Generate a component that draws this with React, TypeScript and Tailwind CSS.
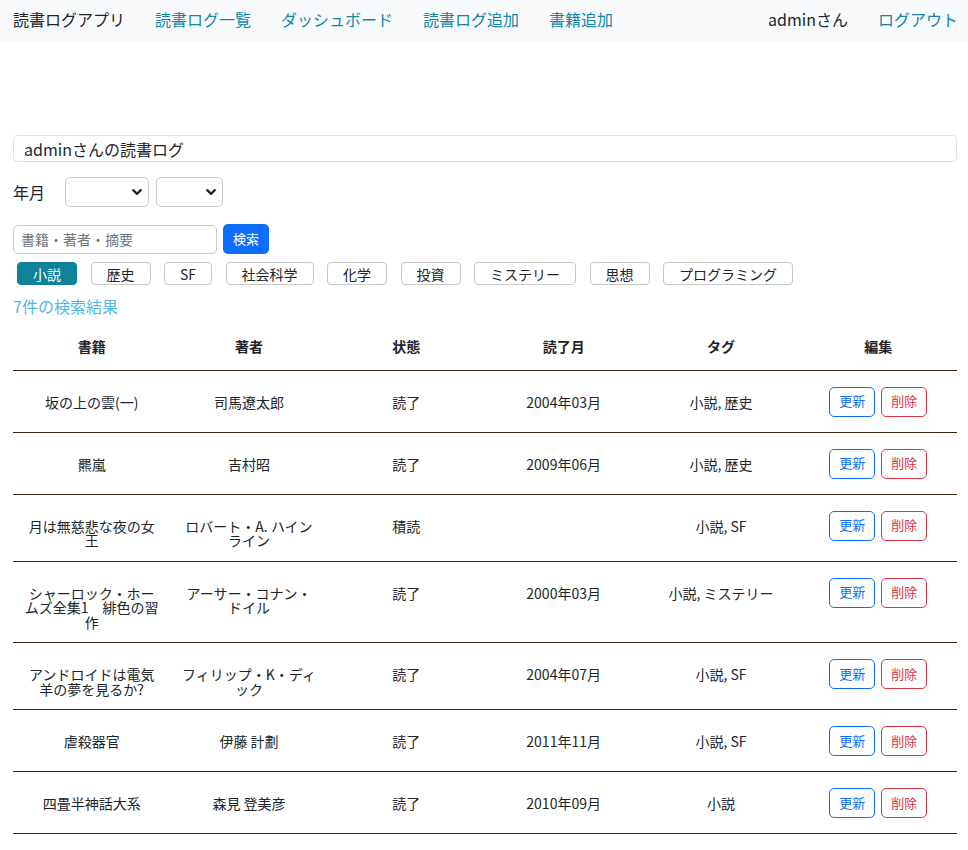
import React from 'react'

type Log = {
  title: string
  author: string
  status: string
  month: string
  tags: string
}

const logs: Log[] = [
  { title: '坂の上の雲(一)', author: '司馬遼太郎', status: '読了', month: '2004年03月', tags: '小説, 歴史' },
  { title: '羆嵐', author: '吉村昭', status: '読了', month: '2009年06月', tags: '小説, 歴史' },
  { title: '月は無慈悲な夜の女王', author: 'ロバート・A. ハインライン', status: '積読', month: '', tags: '小説, SF' },
  {
    title: 'シャーロック・ホームズ全集1　緋色の習作',
    author: 'アーサー・コナン・ドイル',
    status: '読了',
    month: '2000年03月',
    tags: '小説, ミステリー',
  },
  {
    title: 'アンドロイドは電気羊の夢を見るか?',
    author: 'フィリップ・K・ディック',
    status: '読了',
    month: '2004年07月',
    tags: '小説, SF',
  },
  { title: '虐殺器官', author: '伊藤 計劃', status: '読了', month: '2011年11月', tags: '小説, SF' },
  { title: '四畳半神話大系', author: '森見 登美彦', status: '読了', month: '2010年09月', tags: '小説' },
]

const tags = ['小説', '歴史', 'SF', '社会科学', '化学', '投資', 'ミステリー', '思想', 'プログラミング']

function Chevron() {
  return (
    <svg
      className="pointer-events-none absolute right-[6px] top-1/2 h-[10px] w-[12px] -translate-y-1/2"
      viewBox="0 0 16 12"
      fill="none"
      stroke="#212529"
      strokeWidth="3"
      strokeLinecap="round"
      strokeLinejoin="round"
    >
      <path d="M3 3.5l5 5 5-5" />
    </svg>
  )
}

function Select({ width }: { width: string }) {
  return (
    <div className={`relative ${width}`}>
      <select className="h-[30px] w-full appearance-none rounded-[5px] border border-[#c9c9c9] bg-white px-2 text-sm">
        <option value=""></option>
      </select>
      <Chevron />
    </div>
  )
}

// テキスト列はボタンのベースラインに合わせて少し下げる
const cell = 'px-[10px] pt-4 pb-[13px] align-top'

export default function App() {
  return (
    <div
      className="min-h-[850px] bg-white text-[#212529]"
      style={{ fontFamily: '"Noto Sans CJK JP", "Noto Sans", sans-serif' }}
    >
      <nav className="flex h-[42px] items-start bg-[#f8f9fa] pl-[13px] pr-[10px] pt-[8px] text-base leading-[22px]">
        <div className="flex gap-[30px]">
          <span className="text-[#212529]">読書ログアプリ</span>
          <a className="text-[#1587a6]">読書ログ一覧</a>
          <a className="text-[#1587a6]">ダッシュボード</a>
          <a className="text-[#1587a6]">読書ログ追加</a>
          <a className="text-[#1587a6]">書籍追加</a>
        </div>
        <div className="ml-auto flex gap-[30px]">
          <span className="text-[#212529]">adminさん</span>
          <a className="text-[#1587a6]">ログアウト</a>
        </div>
      </nav>

      <main className="pl-[13px] pr-[11px] pt-[93px]">
        <div className="flex h-[27px] items-center rounded-[4px] border border-[#dee2e6] pl-[10px] text-base">
          adminさんの読書ログ
        </div>

        <div className="mt-[15px] flex items-center">
          <span className="w-[52px] text-base">年月</span>
          <div className="flex gap-[7px]">
            <Select width="w-[84px]" />
            <Select width="w-[67px]" />
          </div>
        </div>

        <div className="mt-[17px] flex items-center gap-[6px]">
          <input
            placeholder="書籍・著者・摘要"
            className="h-[29px] w-[204px] rounded-[5px] border border-[#c9c9c9] px-[7px] text-[14px] placeholder:text-[#6c757d]"
          />
          <button className="h-[30px] w-[46px] rounded-[5px] bg-[#0d6efd] text-[13px] text-white">検索</button>
        </div>

        <div className="mt-[8px] flex gap-[13.5px] pl-[4px]">
          {tags.map((t, i) => (
            <button
              key={t}
              className={`h-[23px] rounded-[4px] border px-[15px] text-[14px] leading-none ${
                i === 0 ? 'border-[#0e8299] bg-[#0e8299] text-white' : 'border-[#c8c8c8] bg-white text-[#212529]'
              }`}
            >
              {t}
            </button>
          ))}
        </div>

        <p className="mt-[9px] text-base leading-[24px] text-[#52b9e4]">7件の検索結果</p>

        <table className="w-[944px] table-fixed border-collapse text-center text-[14px] leading-[14.5px]">
          <thead>
            <tr className="border-b border-[#3b2c07]">
              {['書籍', '著者', '状態', '読了月', 'タグ', '編集'].map((h) => (
                <th key={h} className="px-[10px] pt-[21px] pb-4 font-bold">
                  {h}
                </th>
              ))}
            </tr>
          </thead>
          <tbody>
            {logs.map((l) => (
              <tr key={l.title} className="border-b border-[#3b2c07]">
                <td className={cell}>
                  <div className="pt-2">{l.title}</div>
                </td>
                <td className={cell}>
                  <div className="pt-2">{l.author}</div>
                </td>
                <td className={cell}>
                  <div className="pt-2">{l.status}</div>
                </td>
                <td className={cell}>
                  <div className="pt-2">{l.month}</div>
                </td>
                <td className={cell}>
                  <div className="pt-2">{l.tags}</div>
                </td>
                <td className="px-[10px] pt-4 pb-[15px] align-top">
                  <div className="flex justify-center gap-[6px]">
                    <button className="h-[30px] w-[46px] rounded-[5px] border border-[#0d6efd] text-[13px] text-[#0d6efd]">
                      更新
                    </button>
                    <button className="h-[30px] w-[46px] rounded-[5px] border border-[#dc3545] text-[13px] text-[#dc3545]">
                      削除
                    </button>
                  </div>
                </td>
              </tr>
            ))}
          </tbody>
        </table>
      </main>
    </div>
  )
}
